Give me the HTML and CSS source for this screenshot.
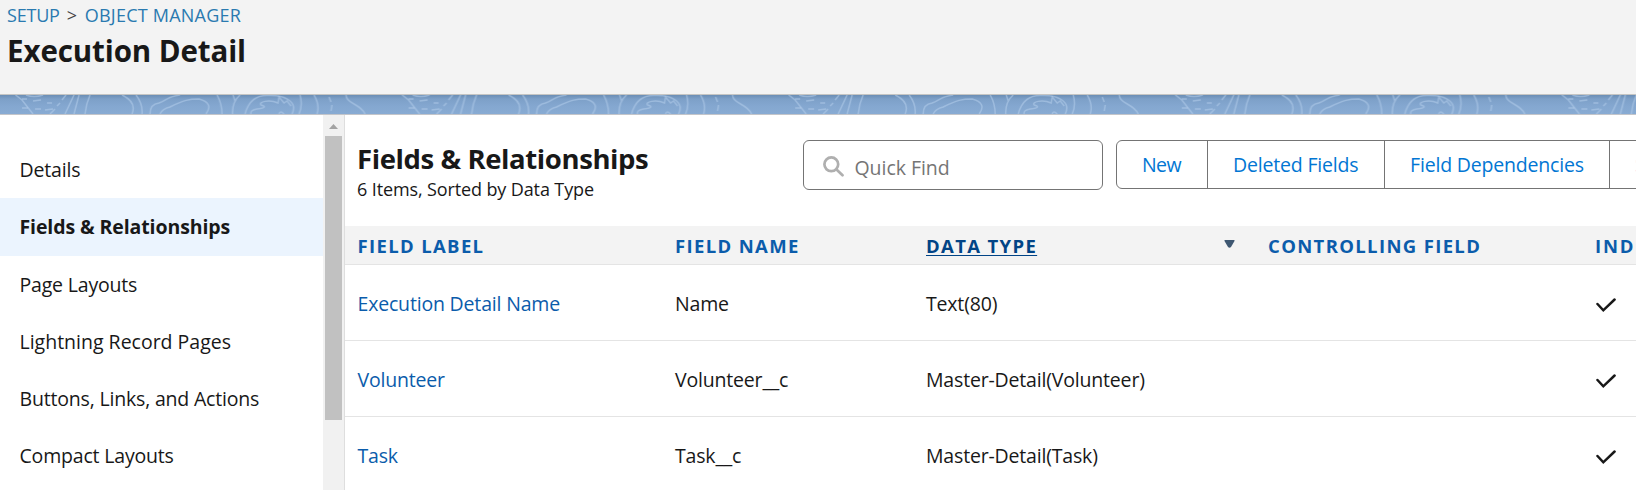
FILE: index.html
```
<!DOCTYPE html>
<html lang="en">
<head>
<meta charset="utf-8">
<title>Execution Detail</title>
<link rel="stylesheet" href="styles.css">
</head>
<body>
<header class="page-header">
  <nav class="breadcrumb"><a>SETUP</a><span class="crumb-sep">&gt;</span><a class="crumb-last">OBJECT MANAGER</a></nav>
  <h1 class="page-title">Execution Detail</h1>
</header>
<div class="band">
  <svg class="band-art" width="1636" height="19">
    <defs>
      <pattern id="topo" width="386.6" height="19" patternUnits="userSpaceOnUse">
        <g class="topo-lines">
          <path d="M15.5 0L22 5L33 19M26 0Q34 3 43 0"/>
          <path d="M22 4h5M33 6l8-1M47 8h5M22 13h6M35 14h6M45 15l8-1M66 0L62 5M60 8L57 11M55 14L50 19"/>
          <path d="M74 0L65 19M79 0L74 19M90 0Q86 9 85 19"/>
          <path d="M122 0Q137 7 132 19M136 0Q143 9 142 19"/>
          <path d="M150 19Q150 9 159 8C166 6 166 2 180 0"/>
          <path d="M160 19Q162 14 170 12C184 5 189 4 199 4Q214 8 206 19"/>
          <path d="M217 0Q222 9 222 19M232.500 19Q232 7 240 0M233 0L235 6"/>
          <path d="M245 19Q250 0 268 0.500Q283 0 290 6Q296 11 292 19"/>
          <path d="M251 19Q250 15 257 14C267 13 265 11 261 10C258 7 269 4 278 8L279 2L284 8L287 6L291 11M279 19Q280 15 284 19"/>
          <path d="M300 0Q303 10 299 19M314 0Q320 10 317 19M329 2L331 7M332 10L331 16"/>
          <path d="M346 0Q346 5 354 9Q363 14 365 19"/>
        </g>
      </pattern>
    </defs>
    <rect width="1636" height="19" fill="url(#topo)"/>
  </svg>
</div>
<div class="workspace">
  <nav class="sidebar">
    <a class="side-item">Details</a>
    <a class="side-item side-active">Fields &amp; Relationships</a>
    <a class="side-item">Page Layouts</a>
    <a class="side-item side-wide">Lightning Record Pages</a>
    <a class="side-item">Buttons, Links, and Actions</a>
    <a class="side-item">Compact Layouts</a>
  </nav>
  <div class="scrollbar">
    <svg class="scroll-up" width="9" height="5"><path d="M0 5L4.500 0L9 5Z"/></svg>
    <div class="thumb"></div>
  </div>
  <main class="content">
    <div class="toolbar">
      <div class="heading">
        <h2 class="list-title">Fields &amp; Relationships</h2>
        <p class="list-meta">6 Items, Sorted by Data Type</p>
      </div>
      <div class="search">
        <svg class="search-icon" width="21" height="21"><circle cx="8.300" cy="8.300" r="6.900"/><path d="M13.500 13.500L19.500 19.300"/></svg>
        <span class="placeholder">Quick Find</span>
      </div>
      <div class="buttons">
        <span class="btn btn-new">New</span><span class="btn btn-deleted">Deleted Fields</span><span class="btn btn-deps">Field Dependencies</span><span class="btn btn-history">Set History Tracking</span>
      </div>
    </div>
    <div class="row head">
      <span>FIELD LABEL</span><span>FIELD NAME</span>
      <span class="sorted"><u class="sort-label">DATA TYPE</u><svg class="sort-icon" width="11" height="8"><path d="M1 0H10Q11 0 10.500 1L7 7Q5.500 8.500 4 7L.5 1Q0 0 1 0Z"/></svg></span>
      <span>CONTROLLING FIELD</span><span class="head-indexed">INDEXED</span>
    </div>
    <div class="row">
      <a>Execution Detail Name</a><span>Name</span><span>Text(80)</span><span></span>
      <svg class="check" width="20" height="15"><path d="M1.500 6L7.300 12.300L18.600 1.500"/></svg>
    </div>
    <div class="row">
      <a>Volunteer</a><span>Volunteer__c</span><span>Master-Detail(Volunteer)</span><span></span>
      <svg class="check" width="20" height="15"><path d="M1.500 6L7.300 12.300L18.600 1.500"/></svg>
    </div>
    <div class="row">
      <a>Task</a><span>Task__c</span><span>Master-Detail(Task)</span><span></span>
      <svg class="check" width="20" height="15"><path d="M1.500 6L7.300 12.300L18.600 1.500"/></svg>
    </div>
  </main>
</div>
</body>
</html>
```
FILE: styles.css
```
* { box-sizing: border-box; }
body {
  margin: 0;
  height: 490px;
  overflow: hidden;
  display: flex;
  flex-direction: column;
  background: #fff;
  color: #181818;
  font: 19.5px "Open Sans", sans-serif;
  letter-spacing: -0.18px;
  white-space: nowrap;
}
h1, h2, p { margin: 0; }

.page-header {
  flex: none;
  height: 95px;
  padding: 3px 0 0 7px;
  background: #f3f3f3;
  border-bottom: 1px solid #c5c5c3;
}
.breadcrumb {
  display: flex;
  height: 24px;
  line-height: 24px;
  font-size: 18px;
  color: #2a7ab0;
  letter-spacing: -0.2px;
}
.crumb-sep { width: 25px; padding-left: 7px; color: #444; font-size: 18px; }
.crumb-last { letter-spacing: 0.23px; }
.page-title {
  margin-top: 5px;
  font-size: 29.5px;
  line-height: 37px;
  font-weight: 700;
  letter-spacing: -0.1px;
}

.band {
  flex: none;
  height: 20px;
  background: linear-gradient(#6b8eb5, #7da0c8 4px, #84a7d0 11px, #88abd3);
  border-bottom: 1px solid #c3c5ca;
}
.band-art { display: block; }
.topo-lines { fill: none; stroke: #b4cdea; stroke-opacity: 0.55; stroke-width: 1.5; }

.workspace { flex: 1; display: flex; min-height: 0; }
.sidebar { width: 323px; flex: none; padding-top: 26px; }
.side-item { display: block; height: 57.25px; line-height: 58px; padding-left: 19.5px; }
.side-active { background: #ebf4fe; font-weight: 700; letter-spacing: -0.1px; }
.side-wide { letter-spacing: 0; }

.scrollbar {
  width: 22px;
  flex: none;
  padding: 9px 0 0 2px;
  background: #f1f1f1;
  border-right: 1px solid #dedede;
}
.scroll-up { display: block; margin: 0 0 7px 4px; fill: #a3a3a3; }
.thumb { width: 17px; height: 284px; background: #c1c1c1; }

.content { width: 1291px; flex: none; overflow: hidden; }
.toolbar { display: flex; height: 111px; padding: 25px 0 0 12px; }
.heading { width: 446px; flex: none; }
.list-title { font-size: 27.5px; line-height: 38px; font-weight: 700; letter-spacing: -0.4px; }
.list-meta { font-size: 18px; line-height: 23px; letter-spacing: -0.12px; }
.search {
  width: 300px;
  height: 50px;
  flex: none;
  display: flex;
  align-items: center;
  padding: 4px 0 0 19px;
  border: 1px solid #747474;
  border-radius: 6px;
}
.search-icon { margin-bottom: 1px; fill: none; stroke: #afafaf; stroke-width: 2.7; stroke-linecap: round; }
.placeholder { margin-left: 10.5px; color: #757575; letter-spacing: -0.05px; }
.buttons {
  display: flex;
  width: 700px;
  height: 49px;
  flex: none;
  margin-left: 13px;
  border: 1px solid #747474;
  border-radius: 6px;
  line-height: 47px;
  color: #0176d3;
}
.btn { padding-left: 25px; border-right: 1px solid #747474; }
.btn-new { width: 91px; letter-spacing: -0.6px; }
.btn-deleted { width: 177px; }
.btn-deps { width: 225px; }
.btn-history { flex: 1; border-right: 0; }

.row {
  display: grid;
  grid-template-columns: 317.500px 251px 342px 327px 200px;
  align-items: center;
  height: 76px;
  padding: 1px 0 0 12.5px;
  border-bottom: 1px solid #e4e4e4;
}
.row a { color: #0b5cab; }
.head {
  height: 39px;
  padding-top: 0;
  background: #f3f3f3;
  color: #0b5cab;
  font-size: 18.5px;
  font-weight: 700;
  letter-spacing: 1.35px;
}
.head-indexed { letter-spacing: 1.8px; }
.sorted { display: flex; align-items: center; justify-content: space-between; padding-right: 33px; }
.sort-label { color: #014486; text-decoration-thickness: 1px; text-underline-offset: 2px; }
.sort-icon { fill: #3e5771; margin-bottom: 3px; }
.check { margin: 4px 0 0 .5px; fill: none; stroke: #181818; stroke-width: 2.5; stroke-linecap: round; stroke-linejoin: miter; }
```
